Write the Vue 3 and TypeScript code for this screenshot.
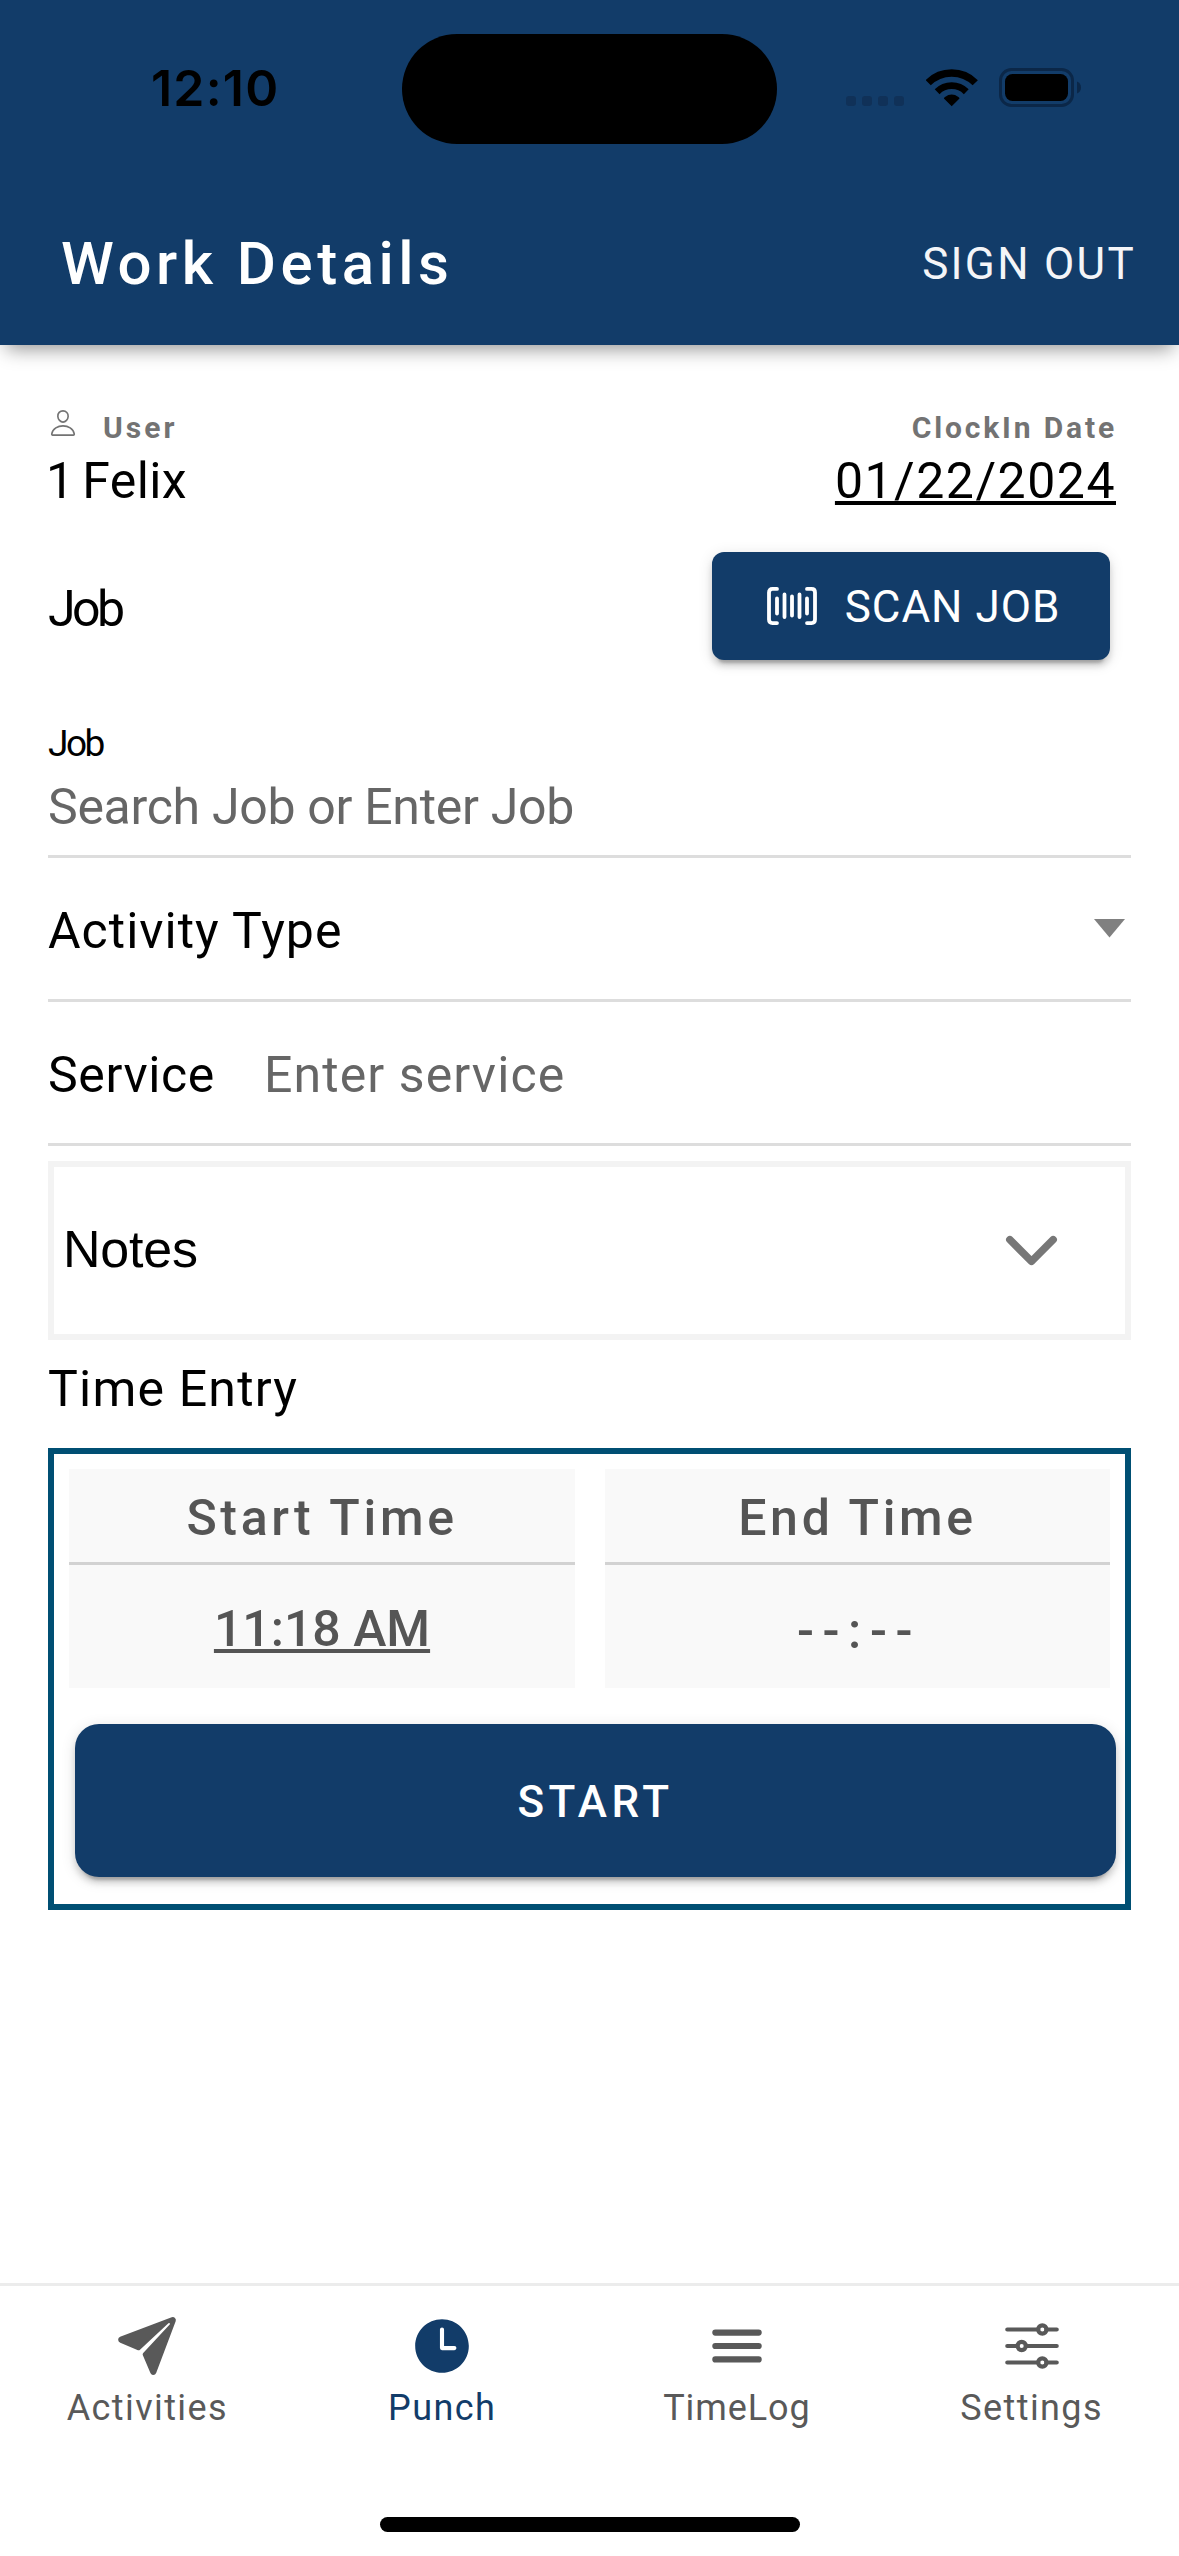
<script setup lang="ts">
import { ref } from 'vue'

interface Tab {
  id: string
  label: string
}

const tabs: Tab[] = [
  { id: 'activities', label: 'Activities' },
  { id: 'punch', label: 'Punch' },
  { id: 'timelog', label: 'TimeLog' },
  { id: 'settings', label: 'Settings' },
]
const activeTab = ref<string>('punch')
const user = '1 Felix'
const clockInDate = '01/22/2024'
const startTime = '11:18 AM'
const endTime = '--:--'
</script>

<template>
  <div class="screen">
    <header class="header">
      <div class="status">
        <span class="clock">12:10</span>
        <div class="island"></div>
        <div class="indicators">
          <svg class="signal" viewBox="0 0 58 10"><rect v-for="n in 4" :key="n" :x="(n - 1) * 16" y="0" width="10" height="10" rx="3" /></svg>
          <svg class="wifi" viewBox="0 0 52 38">
            <path d="M2.15 13.75A33.3 33.3 0 0 1 49.25 13.75" fill="none" stroke="#000" stroke-width="7.4" />
            <path d="M11.13 22.73A20.6 20.6 0 0 1 40.27 22.73" fill="none" stroke="#000" stroke-width="6.8" />
            <path d="M25.7 37.3L17.9 29.6Q17.9 28.6 19 27.9A11.8 11.8 0 0 1 32.4 27.9Q33.5 28.6 33.5 29.6Z" />
          </svg>
          <svg class="battery" viewBox="0 0 82 39">
            <rect x="1.5" y="1.5" width="72" height="36" rx="11" fill="none" stroke="#0b2748" stroke-width="3" />
            <rect x="6" y="6" width="63" height="27" rx="7.5" />
            <path d="M78 13.5c5.3 1.5 5.3 10.500 0 12z" fill="#0b2748" />
          </svg>
        </div>
      </div>
      <div class="toolbar">
        <h1 class="title">Work Details</h1>
        <button class="sign-out">SIGN OUT</button>
      </div>
    </header>

    <main class="content">
      <section class="info">
        <div>
          <div class="caption">
            <svg class="person" viewBox="0 0 512 512" fill="none" stroke="currentColor" stroke-width="28" stroke-linejoin="round">
              <path d="M344 144c-3.920 52.870-44 96-88 96s-84.150-43.120-88-96c-4-55 35-96 88-96s92 42 88 96z" />
              <path d="M256 304c-87 0-175.300 48-191.640 138.600C62.390 453.520 68.570 464 80 464h352c11.440 0 17.620-10.480 15.650-21.400C431.300 352 343 304 256 304z" />
            </svg>
            <span class="user-caption">User</span>
          </div>
          <div class="value user-value">{{ user }}</div>
        </div>
        <div class="date">
          <div class="caption date-caption">ClockIn Date</div>
          <div class="value date-value"><span>{{ clockInDate }}</span></div>
        </div>
      </section>

      <section class="job-row">
        <span class="job-heading">Job</span>
        <button class="scan">
          <svg class="barcode" viewBox="0 0 50 38" fill="none" stroke="#fff" stroke-width="3.8" stroke-linecap="round" stroke-linejoin="round">
            <path d="M10 1.900H5.500Q2 1.900 2 5.400V32.600Q2 36.100 5.500 36.100H10M40 1.900h4.500Q48 1.900 48 5.400V32.600Q48 36.100 44.500 36.100H40" />
            <path d="M10 11.500v15M17.500 7.500v22.500M25 9.500v19M32.500 7.500v22.500M40 11.500v15" />
          </svg>
          <span class="scan-label">SCAN JOB</span>
        </button>
      </section>

      <section class="field stacked">
        <label class="small-label">Job</label>
        <div class="placeholder search">Search Job or Enter Job</div>
      </section>
      <section class="field">
        <span class="activity">Activity Type</span>
        <svg class="caret" viewBox="0 0 31 19"><path d="M0 0h31L15.500 18.500z" fill="#808080" /></svg>
      </section>
      <section class="field">
        <span class="service">Service</span>
        <span class="placeholder enter">Enter service</span>
      </section>

      <section class="notes">
        <span class="notes-label">Notes</span>
        <svg class="chevron" viewBox="0 0 512 512" fill="none" stroke="#777" stroke-width="50" stroke-linecap="round" stroke-linejoin="round">
          <path d="M112 184l144 144 144-144" />
        </svg>
      </section>

      <h2 class="section-title">Time Entry</h2>
      <section class="panel">
        <div class="times">
          <div class="time-card">
            <div class="time-head">Start Time</div>
            <div class="time-value linked"><span>{{ startTime }}</span></div>
          </div>
          <div class="time-card">
            <div class="time-head">End Time</div>
            <div class="time-value empty">{{ endTime }}</div>
          </div>
        </div>
        <button class="start">START</button>
      </section>
    </main>

    <nav class="tabs">
      <div
        v-for="tab in tabs"
        :key="tab.id"
        :class="['tab', tab.id, { active: tab.id === activeTab }]"
        @click="activeTab = tab.id"
      >
        <svg class="tab-icon" viewBox="0 0 512 512" fill="currentColor">
          <path v-if="tab.id === 'activities'" d="M473 39.050a24 24 0 00-25.500-5.460L47.470 185h-.08a24 24 0 001 45.160l.41.13 137.300 58.630a16 16 0 0015.540-3.590L422 80a7.070 7.070 0 0110 10L226.660 310.260a16 16 0 00-3.590 15.540l58.650 137.380c.06.2.12.38.19.57 3.200 9.270 11.300 15.810 21.090 16.250h1a24.630 24.630 0 0023-15.460L478.390 64.620A24 24 0 00473 39.050z" />
          <path v-else-if="tab.id === 'punch'" d="M256 48C141.130 48 48 141.130 48 256s93.130 208 208 208 208-93.130 208-208S370.870 48 256 48zm96 240h-96a16 16 0 01-16-16V128a16 16 0 0132 0v128h80a16 16 0 010 32z" />
          <path v-else-if="tab.id === 'timelog'" d="M88 152h336M88 256h336M88 360h336" fill="none" stroke="currentColor" stroke-width="48" stroke-linecap="round" />
          <g v-else fill="none" stroke="currentColor" stroke-width="32" stroke-linecap="round">
            <path d="M368 128h80M64 128h240M368 384h80M64 384h240M208 256h240M64 256h80" />
            <circle cx="336" cy="128" r="32" />
            <circle cx="176" cy="256" r="32" />
            <circle cx="336" cy="384" r="32" />
          </g>
        </svg>
        <span class="tab-label">{{ tab.label }}</span>
      </div>
      <div class="home-indicator"></div>
    </nav>
  </div>
</template>

<style>
body {
  margin: 0;
  background: #fff;
}
</style>

<style scoped>
.screen {
  display: flex;
  flex-direction: column;
  box-sizing: border-box;
  width: 1179px;
  height: 2556px;
  overflow: hidden;
  background: #fff;
  color: #000;
  font-family: Roboto, "Liberation Sans", sans-serif;
  font-size: 50px;
  white-space: nowrap;
}
button {
  margin: 0;
  padding: 0;
  border: 0;
  font-family: inherit;
}
.header {
  flex: none;
  height: 345px;
  background: #123c69;
  box-shadow: 0 10px 18px -6px rgba(0, 0, 0, 0.42);
}
.status {
  position: relative;
  display: flex;
  align-items: flex-start;
  justify-content: space-between;
  height: 182px;
}
.clock {
  margin: 58px 0 0 151px;
  font-family: Inter, sans-serif;
  font-size: 50px;
  font-weight: 600;
  line-height: 60px;
  letter-spacing: 1.200px;
}
.island {
  position: absolute;
  left: 402px;
  top: 34px;
  width: 375px;
  height: 110px;
  border-radius: 55px;
  background: #000;
}
.indicators {
  display: flex;
  align-items: flex-start;
  margin: 68px 98px 0 0;
}
.signal {
  width: 58px;
  height: 10px;
  margin: 28px 22px 0 0;
  fill: #103158;
}
.wifi {
  width: 52px;
  height: 38px;
  margin: 1px 21px 0 0;
}
.battery {
  width: 82px;
  height: 39px;
}
.toolbar {
  display: flex;
  align-items: center;
  justify-content: space-between;
  height: 163px;
  padding: 0 43px 0 61px;
}
.title {
  margin: 0;
  color: #fff;
  font-size: 60px;
  font-weight: 500;
  letter-spacing: 4.500px;
}
.sign-out {
  background: none;
  color: #f4f5f8;
  font-size: 44px;
  letter-spacing: 2.300px;
}
.content {
  flex: 1;
  padding: 63px 48px 0;
}
.info {
  display: flex;
  justify-content: space-between;
}
.caption {
  display: flex;
  height: 40px;
  color: #737373;
  font-size: 30px;
  font-weight: 700;
  line-height: 40px;
}
.person {
  width: 30px;
  height: 30px;
  margin-right: 25px;
}
.user-caption {
  letter-spacing: 3px;
}
.value {
  height: 65px;
  line-height: 67px;
}
.user-value {
  margin-left: -2px;
  letter-spacing: 0.400px;
  word-spacing: -5px;
}
.date {
  margin-right: 15px;
}
.date-caption {
  justify-content: flex-end;
  margin-right: -1px;
  letter-spacing: 2.850px;
}
.date-value {
  letter-spacing: 1.500px;
  text-align: right;
}
.date-value span,
.linked span {
  text-decoration: underline;
  text-decoration-thickness: 4px;
  text-underline-offset: 3px;
}
.job-row {
  display: flex;
  align-items: center;
  justify-content: space-between;
  height: 108px;
  margin-top: 39px;
}
.job-heading {
  padding-top: 5px;
  letter-spacing: -3.500px;
}
.scan {
  display: flex;
  align-items: center;
  justify-content: center;
  box-sizing: border-box;
  width: 398px;
  height: 108px;
  margin-right: 21px;
  padding-left: 5px;
  gap: 28px;
  border-radius: 12px;
  background: #123c69;
  color: #fff;
  font-size: 44px;
  letter-spacing: 1px;
  box-shadow: 0 9px 3px -6px rgba(0, 0, 0, 0.2), 0 6px 6px rgba(0, 0, 0, 0.14), 0 3px 15px rgba(0, 0, 0, 0.12);
}
.scan-label {
  padding-top: 2px;
}
.barcode {
  width: 50px;
  height: 38px;
}
.field {
  display: flex;
  align-items: center;
  box-sizing: border-box;
  height: 144px;
  padding-top: 5px;
  border-bottom: 3px solid #ddd;
}
.stacked {
  display: block;
  height: 198px;
  padding-top: 64px;
}
.small-label {
  display: block;
  height: 39px;
  font-size: 37px;
  line-height: 40px;
  letter-spacing: -2.500px;
}
.placeholder {
  color: #666;
}
.search {
  height: 88px;
  line-height: 88px;
  letter-spacing: -0.300px;
}
.activity {
  letter-spacing: 1px;
}
.caret {
  width: 31px;
  height: 19px;
  margin: 0 6px 5px auto;
}
.service {
  width: 216px;
  letter-spacing: 0.600px;
}
.enter {
  letter-spacing: 1.100px;
}
.notes {
  display: flex;
  align-items: center;
  justify-content: space-between;
  box-sizing: border-box;
  height: 179px;
  margin-top: 15px;
  padding: 0 55px 0 9px;
  border: 6px solid #f3f3f3;
  font-family: "Liberation Sans", Arial, sans-serif;
  font-size: 52px;
  letter-spacing: -0.200px;
}
.notes-label {
  padding-bottom: 3px;
}
.chevron {
  width: 77px;
  height: 77px;
}
.section-title {
  height: 97px;
  margin: 0 0 11px;
  font-size: 50px;
  font-weight: 400;
  line-height: 98px;
  letter-spacing: 1.200px;
}
.panel {
  box-sizing: border-box;
  height: 462px;
  padding: 15px 9px 0 15px;
  border: 6px solid #004f73;
}
.times {
  display: grid;
  grid-template-columns: 506px 505px;
  gap: 30px;
}
.time-card {
  background: #f9f9f9;
  color: #555;
  font-weight: 500;
  text-align: center;
}
.time-head {
  height: 93px;
  border-bottom: 3px solid #d2d2d2;
  line-height: 99px;
  letter-spacing: 3.700px;
}
.time-value {
  height: 123px;
  line-height: 128px;
}
.empty {
  line-height: 132px;
  letter-spacing: 8.600px;
  text-indent: 3px;
}
.start {
  display: block;
  box-sizing: border-box;
  width: 1041px;
  height: 153px;
  margin: 36px 0 0 6px;
  padding-top: 2px;
  border-radius: 24px;
  background: #123c69;
  color: #fff;
  font-size: 44px;
  font-weight: 500;
  letter-spacing: 4.500px;
  box-shadow: 0 9px 3px -6px rgba(0, 0, 0, 0.2), 0 6px 6px rgba(0, 0, 0, 0.14), 0 3px 15px rgba(0, 0, 0, 0.12);
}
.tabs {
  position: relative;
  display: flex;
  flex: none;
  box-sizing: border-box;
  height: 273px;
  border-top: 3px solid #ececec;
}
.tab {
  display: flex;
  flex: 1;
  flex-direction: column;
  align-items: center;
  padding-top: 27px;
  color: #595959;
  font-size: 36px;
  letter-spacing: 1.400px;
}
.timelog {
  letter-spacing: 0.900px;
}
.active {
  color: #123c69;
}
.tab-icon {
  width: 66px;
  height: 66px;
}
.tab-label {
  margin-top: 9px;
  line-height: 40px;
}
.home-indicator {
  position: absolute;
  left: 380px;
  top: 231px;
  width: 420px;
  height: 15px;
  border-radius: 8px;
  background: #000;
}
</style>
